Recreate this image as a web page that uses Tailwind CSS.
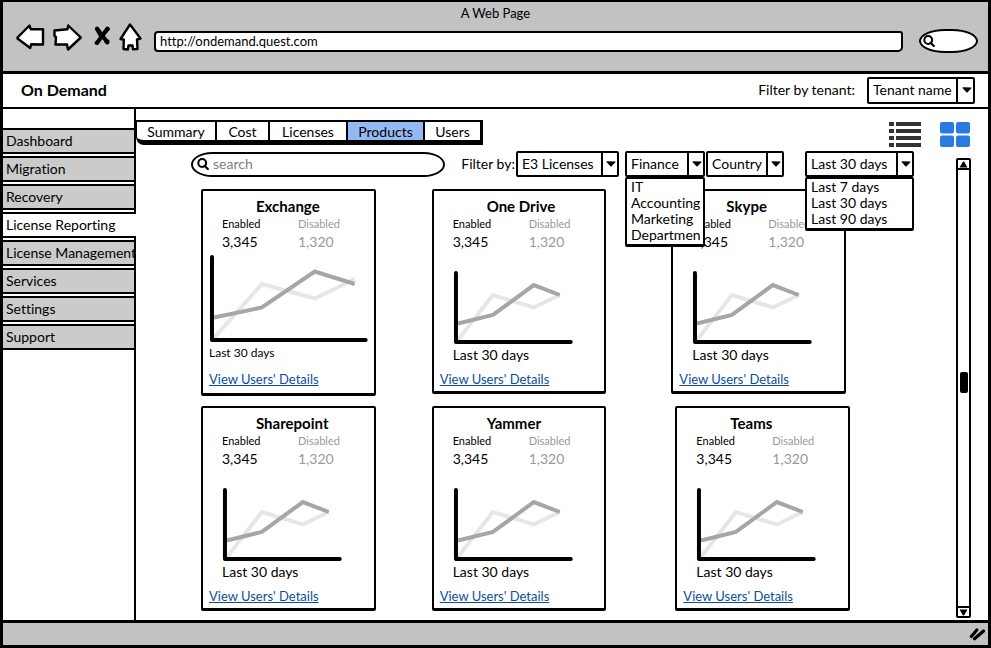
<!DOCTYPE html>
<html lang="en">
<head>
<meta charset="utf-8">
<meta name="viewport" content="width=device-width, initial-scale=1">
<title>On Demand</title>
<script src="https://cdn.jsdelivr.net/npm/@tailwindcss/browser@4"></script>
</head>
<body class="bg-white font-['Lato','Noto_Sans',sans-serif] text-[14px] leading-5 text-black [font-variant-ligatures:none]">
<svg class="hidden" aria-hidden="true">
  <symbol id="caret" viewBox="0 0 10 6"><path d="M0.3 0.8Q0.5 0.2 1.2 0.2L9 0.4Q9.8 0.6 9.3 1.3L5.6 5.2Q5 5.8 4.4 5.2Z"/></symbol>
  <symbol id="lens" viewBox="0 0 12 12"><circle cx="5.2" cy="5" r="3.9" fill="none" stroke="#000" stroke-width="2"/><path d="M7.6 7.8L10.8 11" stroke="#000" stroke-width="2.2" stroke-linecap="round"/></symbol>
  <symbol id="chart" viewBox="0 0 171 92">
    <g fill="none" stroke-width="4">
      <path stroke="#e6e6e6" d="M24 88L59 43L100 55.5L126 43"/>
      <path stroke="#a6a6a6" d="M24 71.5L59 63L100 33L126 43"/>
      <path stroke="#000" stroke-linecap="round" stroke-linejoin="round" d="M22 21V90H137"/>
    </g>
  </symbol>
</svg>
<div class="flex min-h-screen flex-col border-[3px] border-t-2 border-black">
  <header class="border-b-[3px] border-black bg-[#c2c2c2] pt-px pb-[18px]">
    <h1 class="text-center text-[13px] leading-5">A Web Page</h1>
    <div class="flex h-[30px] items-center pr-[10px] pl-3">
      <button type="button" aria-label="Back"><svg class="block h-[30px] w-[30px]" viewBox="0 0 30 30"><path d="M2.5 14.5L14.5 2.5L15.7 6.2L28 6.2L28 21.5L16.2 21.2L15.2 25L2.5 15.5Z" fill="#fff" stroke="#000" stroke-width="2.4" stroke-linejoin="round"/></svg></button>
      <button type="button" aria-label="Forward" class="ml-2"><svg class="block h-[30px] w-[30px]" viewBox="0 0 30 30"><path d="M1.5 7.5L14.5 6.3L15.2 2.5L27.8 14.5L15 26.5L14 21.5L2.5 21.5L3 14L1.5 13Z" fill="#fff" stroke="#000" stroke-width="2.4" stroke-linejoin="round"/></svg></button>
      <button type="button" aria-label="Stop" class="ml-[10px]"><svg class="block h-[30px] w-[18px]" viewBox="0 0 18 30"><path d="M4 5.5L14.5 19.5M14.5 5.5L4 20" stroke="#000" stroke-width="4" stroke-linecap="round"/><path d="M3.5 6L8 14M15.5 6L11 11M13 19L15 18M3 20L7 16" stroke="#000" stroke-width="3" stroke-linecap="round"/></svg></button>
      <button type="button" aria-label="Home" class="ml-2"><svg class="block h-[30px] w-6" viewBox="0 0 24 30"><path d="M11 1.5L21.5 15.5L18 16.5L18.5 26L14 26.3L13.5 22.5L9.5 22.5L8.8 26.5L4.5 26L4.8 16.5L1.5 16Z" fill="#fff" stroke="#000" stroke-width="2.4" stroke-linejoin="round"/></svg></button>
      <input type="text" aria-label="Address" value="http://ondemand.quest.com" class="mt-[6px] ml-[11px] h-[21px] min-w-0 flex-1 rounded-[4px_3px_5px_4px] border-2 border-black bg-white px-1 text-[13px]">
      <label class="mt-[6px] ml-4 flex h-6 w-[59px] items-center rounded-[28px/13px] border-2 border-black bg-white pl-[2px]">
        <svg class="h-3 w-3 shrink-0"><use href="#lens"/></svg>
        <input type="text" aria-label="Search the web" class="w-full min-w-0 outline-none">
      </label>
    </div>
  </header>

  <div class="flex h-[35px] items-center justify-between border-b-2 border-black pr-[13px] pb-px pl-[18px]">
    <strong class="text-[16px]">On Demand</strong>
    <div class="flex items-center gap-3">
      <label for="tenant">Filter by tenant:</label>
      <div class="relative">
        <select id="tenant" class="block h-[27px] w-[108px] appearance-none rounded-[2px] border-2 border-black bg-white pl-1"><option>Tenant name</option></select>
        <span class="pointer-events-none absolute inset-y-0 right-0 flex w-[19px] items-center justify-center border-l-2 border-black"><svg class="h-[6px] w-[10px]"><use href="#caret"/></svg></span>
      </div>
    </div>
  </div>

  <div class="flex flex-1">
    <nav aria-label="Main" class="flex w-[133px] shrink-0 flex-col gap-[2px] border-r-2 border-black pt-[19px] whitespace-nowrap">
      <a href="#" class="flex h-[26px] items-center border-y-2 border-black bg-[#cbcbcb] pb-px pl-[3px]">Dashboard</a>
      <a href="#" class="flex h-[26px] items-center border-y-2 border-black bg-[#cbcbcb] pb-px pl-[3px]">Migration</a>
      <a href="#" class="flex h-[26px] items-center border-y-2 border-black bg-[#cbcbcb] pb-px pl-[3px]">Recovery</a>
      <a href="#" aria-current="page" class="-mr-[2px] flex h-[26px] items-center border-y-2 border-black bg-white pb-px pl-[3px]">License Reporting</a>
      <a href="#" class="flex h-[26px] items-center border-y-2 border-black bg-[#cbcbcb] pb-px pl-[3px]">License Management</a>
      <a href="#" class="flex h-[26px] items-center border-y-2 border-black bg-[#cbcbcb] pb-px pl-[3px]">Services</a>
      <a href="#" class="flex h-[26px] items-center border-y-2 border-black bg-[#cbcbcb] pb-px pl-[3px]">Settings</a>
      <a href="#" class="flex h-[26px] items-center border-y-2 border-black bg-[#cbcbcb] pb-px pl-[3px]">Support</a>
    </nav>

    <main class="flex min-w-0 flex-1 flex-col pt-[11px]">
      <div class="flex items-start justify-between pr-[18px]">
        <div role="tablist" class="flex h-[25px] rounded-bl-[8px] border-2 border-b-[5px] border-l border-black border-r-[3px]">
          <button type="button" role="tab" class="w-[80px] border-r-2 border-black">Summary</button>
          <button type="button" role="tab" class="w-[53px] border-r-2 border-black">Cost</button>
          <button type="button" role="tab" class="w-[78px] border-r-2 border-black">Licenses</button>
          <button type="button" role="tab" aria-selected="true" class="w-[77px] border-r-2 border-black bg-[#94b9f2]">Products</button>
          <button type="button" role="tab" class="w-[55px]">Users</button>
        </div>
        <div class="flex gap-[19px] pt-[2px]">
          <button type="button" aria-label="List view"><svg class="block h-[25px] w-8" viewBox="0 0 32 25" fill="#333"><path d="M0 0h5v4H0zM7 0h25v4H7zM0 7h5v4H0zM7 7h25v4H7zM0 14h5v4H0zM7 14h25v4H7zM0 21h5v4H0zM7 21h25v4H7z"/></svg></button>
          <button type="button" aria-label="Grid view"><svg class="block h-[25px] w-[30px]" viewBox="0 0 30 25" fill="#2a7ae6"><rect width="14" height="11.5" rx="2"/><rect x="16" width="14" height="11.5" rx="2"/><rect y="13.5" width="14" height="11.5" rx="2"/><rect x="16" y="13.5" width="14" height="11.5" rx="2"/></svg></button>
        </div>
      </div>

      <div class="flex flex-1">
        <div id="products" class="min-w-0 flex-1 pt-1 pl-[55px]">
          <div class="relative z-10 flex items-center pr-[42px]">
            <label class="flex h-[25px] min-w-0 flex-1 items-center rounded-[22px/13px] border-2 border-black bg-white pl-1">
              <svg class="h-3 w-3 shrink-0"><use href="#lens"/></svg>
              <input type="search" aria-label="Search" placeholder="search" class="w-full min-w-0 px-1 outline-none placeholder:text-[#808080]">
            </label>
            <label for="license" class="ml-4 shrink-0">Filter by:</label>
            <div class="relative ml-px">
              <select id="license" class="block h-[26px] w-[103px] appearance-none rounded-[2px] border-2 border-black bg-white pl-1"><option>E3 Licenses</option></select>
              <span class="pointer-events-none absolute inset-y-0 right-0 flex w-[18px] items-center justify-center border-l-2 border-black"><svg class="h-[6px] w-[10px]"><use href="#caret"/></svg></span>
            </div>
            <div class="relative ml-[6px]">
              <select aria-label="Department" class="block h-[26px] w-20 appearance-none rounded-[2px] border-2 border-black bg-white pl-1"><option>Finance</option></select>
              <span class="pointer-events-none absolute inset-y-0 right-0 flex w-[18px] items-center justify-center border-l-2 border-black"><svg class="h-[6px] w-[10px]"><use href="#caret"/></svg></span>
              <ul role="listbox" aria-label="Departments" class="absolute inset-x-0 top-full overflow-hidden rounded-[2px] border-2 border-b-[3px] border-black bg-white pb-px pl-1 leading-4">
                <li role="option">IT</li><li role="option">Accounting</li><li role="option">Marketing</li><li role="option">Departmen</li>
              </ul>
            </div>
            <div class="relative ml-px">
              <select aria-label="Country" class="block h-[26px] w-[78px] appearance-none rounded-[2px] border-2 border-black bg-white pl-1"><option>Country</option></select>
              <span class="pointer-events-none absolute inset-y-0 right-0 flex w-[18px] items-center justify-center border-l-2 border-black"><svg class="h-[6px] w-[10px]"><use href="#caret"/></svg></span>
            </div>
            <div class="relative ml-[21px]">
              <select aria-label="Period" class="block h-[26px] w-[109px] appearance-none rounded-[2px] border-2 border-black bg-white pl-1"><option>Last 30 days</option></select>
              <span class="pointer-events-none absolute inset-y-0 right-0 flex w-[18px] items-center justify-center border-l-2 border-black"><svg class="h-[6px] w-[10px]"><use href="#caret"/></svg></span>
              <ul role="listbox" aria-label="Periods" class="absolute inset-x-0 top-full rounded-[2px] border-2 border-b-[3px] border-black bg-white pb-px pl-1 leading-4">
                <li role="option">Last 7 days</li><li role="option">Last 30 days</li><li role="option">Last 90 days</li>
              </ul>
            </div>
          </div>

          <div class="mt-3 flex items-start gap-14 pr-[110px] pl-[10px]">
            <article class="h-[207px] flex-1 rounded-[2px] border-2 border-b-[3px] border-black pt-[5px]">
              <h2 class="pl-[53px] text-[15px] font-bold">Exchange</h2>
              <dl class="grid grid-cols-[76px_1fr] grid-rows-[16px_20px] pl-[19px] [grid-auto-flow:column]">
                <dt class="text-[11px] leading-4">Enabled</dt><dd>3,345</dd>
                <dt class="text-[11px] leading-4 text-[#999]">Disabled</dt><dd class="text-[#999]">1,320</dd>
              </dl>
              <svg class="block h-[92px] w-full" viewBox="0 0 171 92" role="img" aria-label="Exchange usage"><g fill="none" stroke-width="4"><path stroke="#e6e6e6" d="M11 86L59 32L112 46.5L152 27"/><path stroke="#a6a6a6" d="M11 65.5L59 55.5L112 19.5L152 32"/><path stroke="#000" stroke-linecap="round" stroke-linejoin="round" d="M9 5V88H163"/></g></svg>
              <p class="pl-[6px] text-[12px] leading-[18px]">Last 30 days</p>
              <a href="#" class="mt-[7px] ml-[6px] inline-block text-[13px] leading-5 text-[#0b4f9c] underline">View Users' Details</a>
            </article>
            <article class="h-[205px] flex-1 rounded-[2px] border-2 border-b-[3px] border-black pt-[5px]">
              <h2 class="pl-[53px] text-[15px] font-bold">One Drive</h2>
              <dl class="grid grid-cols-[76px_1fr] grid-rows-[16px_20px] pl-[19px] [grid-auto-flow:column]">
                <dt class="text-[11px] leading-4">Enabled</dt><dd>3,345</dd>
                <dt class="text-[11px] leading-4 text-[#999]">Disabled</dt><dd class="text-[#999]">1,320</dd>
              </dl>
              <svg class="block h-[92px] w-full" role="img" aria-label="One Drive usage"><use href="#chart"/></svg>
              <p class="pl-[19px] leading-[22px]">Last 30 days</p>
              <a href="#" class="mt-[3px] ml-[6px] inline-block text-[13px] leading-5 text-[#0b4f9c] underline">View Users' Details</a>
            </article>
            <article class="ml-[9px] h-[205px] flex-1 rounded-[2px] border-2 border-b-[3px] border-black pt-[5px]">
              <h2 class="pl-[53px] text-[15px] font-bold">Skype</h2>
              <dl class="grid grid-cols-[76px_1fr] grid-rows-[16px_20px] pl-[19px] [grid-auto-flow:column]">
                <dt class="text-[11px] leading-4">Enabled</dt><dd>3,345</dd>
                <dt class="text-[11px] leading-4 text-[#999]">Disabled</dt><dd class="text-[#999]">1,320</dd>
              </dl>
              <svg class="block h-[92px] w-full" role="img" aria-label="Skype usage"><use href="#chart"/></svg>
              <p class="pl-[19px] leading-[22px]">Last 30 days</p>
              <a href="#" class="mt-[3px] ml-[6px] inline-block text-[13px] leading-5 text-[#0b4f9c] underline">View Users' Details</a>
            </article>
          </div>

          <div class="mt-[10px] flex items-start gap-14 pr-[106px] pl-[10px]">
            <article class="h-[205px] flex-1 rounded-[2px] border-2 border-b-[3px] border-black pt-[5px]">
              <h2 class="pl-[53px] text-[15px] font-bold">Sharepoint</h2>
              <dl class="grid grid-cols-[76px_1fr] grid-rows-[16px_20px] pl-[19px] [grid-auto-flow:column]">
                <dt class="text-[11px] leading-4">Enabled</dt><dd>3,345</dd>
                <dt class="text-[11px] leading-4 text-[#999]">Disabled</dt><dd class="text-[#999]">1,320</dd>
              </dl>
              <svg class="block h-[92px] w-full" role="img" aria-label="Sharepoint usage"><use href="#chart"/></svg>
              <p class="pl-[19px] leading-[22px]">Last 30 days</p>
              <a href="#" class="mt-[3px] ml-[6px] inline-block text-[13px] leading-5 text-[#0b4f9c] underline">View Users' Details</a>
            </article>
            <article class="h-[205px] flex-1 rounded-[2px] border-2 border-b-[3px] border-black pt-[5px]">
              <h2 class="pl-[53px] text-[15px] font-bold">Yammer</h2>
              <dl class="grid grid-cols-[76px_1fr] grid-rows-[16px_20px] pl-[19px] [grid-auto-flow:column]">
                <dt class="text-[11px] leading-4">Enabled</dt><dd>3,345</dd>
                <dt class="text-[11px] leading-4 text-[#999]">Disabled</dt><dd class="text-[#999]">1,320</dd>
              </dl>
              <svg class="block h-[92px] w-full" role="img" aria-label="Yammer usage"><use href="#chart"/></svg>
              <p class="pl-[19px] leading-[22px]">Last 30 days</p>
              <a href="#" class="mt-[3px] ml-[6px] inline-block text-[13px] leading-5 text-[#0b4f9c] underline">View Users' Details</a>
            </article>
            <article class="ml-[13px] h-[205px] flex-1 rounded-[2px] border-2 border-b-[3px] border-black pt-[5px]">
              <h2 class="pl-[53px] text-[15px] font-bold">Teams</h2>
              <dl class="grid grid-cols-[76px_1fr] grid-rows-[16px_20px] pl-[19px] [grid-auto-flow:column]">
                <dt class="text-[11px] leading-4">Enabled</dt><dd>3,345</dd>
                <dt class="text-[11px] leading-4 text-[#999]">Disabled</dt><dd class="text-[#999]">1,320</dd>
              </dl>
              <svg class="block h-[92px] w-full" role="img" aria-label="Teams usage"><use href="#chart"/></svg>
              <p class="pl-[19px] leading-[22px]">Last 30 days</p>
              <a href="#" class="mt-[3px] ml-[6px] inline-block text-[13px] leading-5 text-[#0b4f9c] underline">View Users' Details</a>
            </article>
          </div>
        </div>

        <div role="scrollbar" aria-label="Scroll products" aria-controls="products" aria-valuenow="48" class="mt-[11px] mr-[17px] mb-[2px] flex w-[15px] flex-col items-center rounded-[2px] border-2 border-black">
          <button type="button" aria-label="Scroll up" class="flex h-[10px] w-full items-center justify-center border-b-2 border-black"><svg class="h-[7px] w-[9px] rotate-180" viewBox="0 0 9 7" aria-hidden="true"><path d="M0.5 0.5H8.5L5 6.5H4Z"/></svg></button>
          <div class="flex w-full flex-1 flex-col items-center"><span class="flex-[203]"></span><span class="h-[21px] w-2 rounded-[2px] bg-black"></span><span class="flex-[214]"></span></div>
          <button type="button" aria-label="Scroll down" class="flex h-[10px] w-full items-center justify-center border-t-2 border-black"><svg class="h-[7px] w-[9px]" viewBox="0 0 9 7" aria-hidden="true"><path d="M0.5 0.5H8.5L5 6.5H4Z"/></svg></button>
        </div>
      </div>
    </main>
  </div>

  <footer class="flex h-[25px] items-center justify-end border-t-[3px] border-black bg-[#c2c2c2] pr-[2px]">
    <svg class="h-[14px] w-[17px]" viewBox="0 0 17 14" aria-hidden="true"><path d="M2.3 9.5L7.8 3M5.5 11.8L14.5 4" stroke="#000" stroke-width="3.2" stroke-linecap="round"/></svg>
  </footer>
</div>
</body>
</html>
